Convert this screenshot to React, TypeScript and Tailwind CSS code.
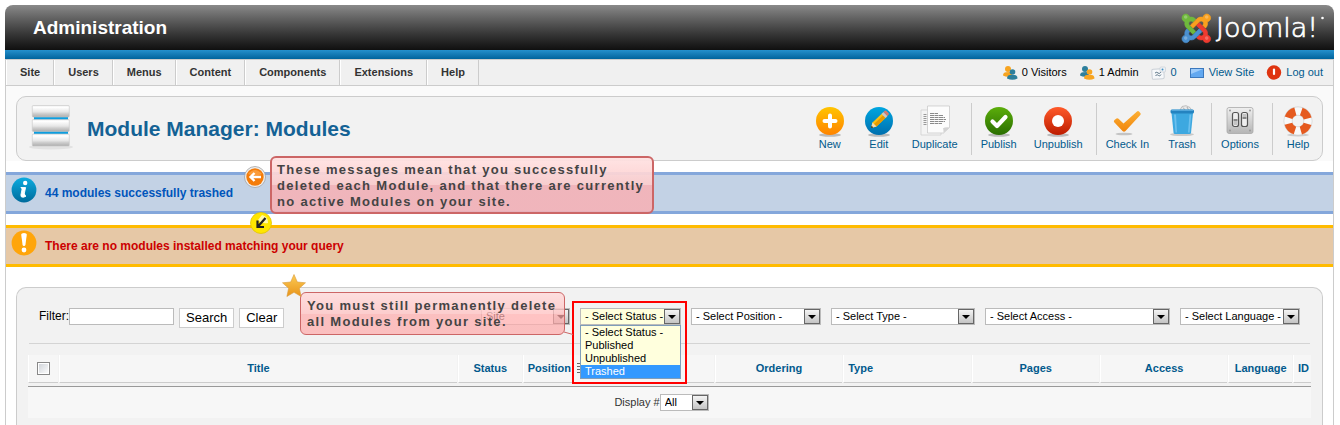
import type { ReactNode } from 'react';

const menuItems = ['Site', 'Users', 'Menus', 'Content', 'Components', 'Extensions', 'Help'];

function JoomlaLogo() {
  return (
    <svg width="146" height="34" viewBox="0 0 146 34" role="img" aria-label="Joomla!">
      <g transform="translate(2 1) scale(0.064)">
        <g strokeWidth="10">
          <path fill="#6fb93c" stroke="#6fb93c" d="M.6 92.1C.6 58.8 27.4 32 60.4 32c30 0 54.5 21.9 59.2 50.2 32.6-7.6 67.1.6 96.5 30l-44.3 44.3c-20.5-20.5-42.6-16.3-55.4-3.5-14.3 14.3-14.3 37.9 0 52.2l99.5 99.5-44 44.3c-87.7-87.2-49.7-49.7-99.8-99.7-26.8-26.5-35-64.8-24.8-98.9C20.4 144.6.6 120.7.6 92.1z" />
          <path fill="#f9a01e" stroke="#f9a01e" d="M130.1 208.5l44.3 44.3c10-10 89.7-89.7 99.7-99.8 14.3-14.3 37.6-14.3 51.9 0 12.8 12.8 17 35-3.5 55.4l44 44.3c31.2-31.2 38.5-67.6 28.9-101.2 29.2-4.1 51.9-29.2 51.9-59.5 0-33.2-26.8-60.1-59.8-60.1-30.3 0-55.4 22.5-59.5 51.6-33.8-9.9-71.7-1.5-98.3 25.1-18.3 19.1-71.1 71.5-99.6 99.9z" />
          <path fill="#ee3b2f" stroke="#ee3b2f" d="M396.4 360.7c8.2-32.7-.9-68.5-26.3-93.9-11.8-12.2 5 4.7-99.5-99.7l-44.3 44.3 99.7 99.7c14.3 14.3 14.3 37.6 0 51.9-12.8 12.8-35 17-55.4-3.5l-44 44.3c27.6 30.2 68 38.8 102.7 28 5.5 27.4 29.7 48.1 58.9 48.1 33 0 59.8-26.8 59.8-60.1 0-30.2-22.5-55-51.6-59.1z" />
          <path fill="#4a90d0" stroke="#4a90d0" d="M312.1 307.6l-44-44.3c-87 86.4-50.4 50.4-99.7 99.8-14.3 14.3-37.6 14.3-51.9 0-13.1-13.4-16.9-35.3 3.2-55.4l-44-44.3c-30.2 30.2-38 65.2-29.5 98.3-26.7 6-46.2 29.9-46.2 58.2C0 453.2 26.8 480 59.8 480c28.6 0 52.5-19.8 58.6-46.7 32.7 8.2 68.5-.6 94.2-26 32.1-32 12.2-12.4 99.5-99.7z" />
        </g>
        <g fill="#fff" opacity=".25">
          <circle cx="58" cy="78" r="28" />
          <circle cx="386" cy="78" r="28" />
          <circle cx="386" cy="408" r="28" />
          <circle cx="58" cy="408" r="28" />
        </g>
      </g>
      <text x="36" y="26" fill="#fff" stroke="#fff" strokeWidth=".7" fontSize="27" fontWeight="200" className="font-['DejaVu_Sans_Light','DejaVu_Sans',sans-serif]">
        Joomla!
      </text>
      <circle cx="142.500" cy="7" r="1.300" fill="#fff" />
    </svg>
  );
}

function Ball({ from, to, children }: { from: string; to: string; children: ReactNode }) {
  const id = `ball-${from.slice(1)}`;
  return (
    <svg width="32" height="32" viewBox="0 0 32 32" aria-hidden="true">
      <defs>
        <linearGradient id={id} x1="0" y1="0" x2="0" y2="1">
          <stop offset="0" stopColor={from} />
          <stop offset="1" stopColor={to} />
        </linearGradient>
      </defs>
      <ellipse cx="16" cy="30" rx="11" ry="1.800" fill="#bbb" />
      <circle cx="16" cy="16" r="14" fill={`url(#${id})`} />
      {children}
    </svg>
  );
}

function NewIcon() {
  return (
    <Ball from="#ffc400" to="#ff8400">
      <path d="M16 10.500v11M10.500 16h11" stroke="#fff" strokeWidth="4" strokeLinecap="round" />
    </Ball>
  );
}

function EditIcon() {
  return (
    <Ball from="#00a6e0" to="#006fae">
      <path d="M8 23l1.500-5.500L20 7.500l4 4L13.500 21.500z" fill="#fdc010" />
      <path d="M10.500 19.500L21.500 9l2.500 2.500L13.500 21.500z" fill="#e69a00" />
      <path d="M8 23l1.500-5.500 4 4z" fill="#f4dcb0" />
      <path d="M8 23l.6-2.300 1.700 1.700z" fill="#222" />
      <path d="M18.500 9l2-2 4 4-2 2z" fill="#c9c9c9" />
      <path d="M20.500 7l1.200-1.200q1-.6 1.800.2l2 2q.8.900 0 1.800L24.500 11z" fill="#d87c6c" />
    </Ball>
  );
}

function DuplicateIcon() {
  return (
    <svg width="32" height="32" viewBox="0 0 32 32" aria-hidden="true">
      <path d="M2 5h20v25H2z" fill="#f4f4f4" stroke="#ccc" strokeWidth=".7" />
      <path d="M4.500 9.500h4M4.500 11.500h4M4.500 13.500h4M4.500 15.500h4M4.500 17.500h4M4.500 19.500h4" stroke="#999" strokeWidth="1" strokeDasharray="3 .6" />
      <path d="M8.500 1h22v21.500l-6 5.500h-16z" fill="#fcfcfc" stroke="#c4c4c4" strokeWidth=".7" />
      <path d="M30.500 22.500q-4.500-.5-6.500.8.800 2 .5 4.700z" fill="#d3d3d3" />
      <path d="M11 8.500h8M11 10.500h13M11 12.500h15M11 14.500h16M11 16.500h15M11 18.500h12" stroke="#8a8a8a" strokeWidth="1" strokeDasharray="4 .5" />
    </svg>
  );
}

function PublishIcon() {
  return (
    <Ball from="#5cae0b" to="#2a6e00">
      <path d="M9.500 16.500l4.500 4.500 8.500-9" fill="none" stroke="#fff" strokeWidth="4.200" strokeLinecap="round" strokeLinejoin="round" />
    </Ball>
  );
}

function UnpublishIcon() {
  return (
    <Ball from="#ff5a2a" to="#bd1c00">
      <circle cx="16" cy="16" r="6" fill="#fff" />
    </Ball>
  );
}

function CheckInIcon() {
  return (
    <svg width="32" height="32" viewBox="0 0 32 32" aria-hidden="true">
      <defs>
        <linearGradient id="tick" x1="0" y1="0" x2="0" y2="1">
          <stop offset="0" stopColor="#fdb035" />
          <stop offset="1" stopColor="#f0850c" />
        </linearGradient>
      </defs>
      <ellipse cx="13" cy="29" rx="8.500" ry="1.300" fill="#c4c4c4" />
      <path d="M3 17q-.5-1 .5-2l2-1.500q1-.6 2 .3l5 4.700L26 6.500q1-.8 2 0l1.500 1.700q.6.800-.2 1.800L14.500 26q-1.500 1.500-3 0z" fill="url(#tick)" />
    </svg>
  );
}

function TrashIcon() {
  return (
    <svg width="32" height="32" viewBox="0 0 32 32" aria-hidden="true">
      <ellipse cx="16" cy="29.500" rx="12" ry="1.600" fill="#c9c9c9" />
      <path d="M14 5l2-3.500 4-.8 4 1.800 2 3.500z" fill="#e9e9e9" stroke="#aaa" strokeWidth=".7" />
      <path d="M17 2.500l2.500 3M21 2l1.500 3" stroke="#999" strokeWidth=".8" />
      <path d="M5.500 8h21.500l-2 20q-.2 1-1.500 1H9q-1.200 0-1.400-1z" fill="#3da8e0" />
      <path d="M8 9.500h2l1 18H9.500zM23.500 9.500h1.800l-1.700 18H22z" fill="#6cc0ee" />
      <rect x="4.500" y="4.500" width="23.500" height="4" rx="1.500" fill="#2483c0" />
      <path d="M5.500 5.200H27" stroke="#69b9e6" />
    </svg>
  );
}

function OptionsIcon() {
  return (
    <svg width="32" height="32" viewBox="0 0 32 32" aria-hidden="true">
      <defs>
        <linearGradient id="plate" x1="0" y1="0" x2="0" y2="1">
          <stop offset="0" stopColor="#f0f0f0" />
          <stop offset="1" stopColor="#b5b5b5" />
        </linearGradient>
      </defs>
      <rect x="3" y="2.500" width="26" height="26" rx="2" fill="url(#plate)" stroke="#aaa" strokeWidth=".8" />
      <g fill="#999">
        <circle cx="6" cy="5.500" r="1" />
        <circle cx="26" cy="5.500" r="1" />
        <circle cx="6" cy="25.500" r="1" />
        <circle cx="26" cy="25.500" r="1" />
      </g>
      <rect x="8.500" y="7.500" width="6" height="14" rx="2" fill="#eee" stroke="#555" strokeWidth="1.200" />
      <rect x="17.500" y="7.500" width="6" height="14" rx="2" fill="#eee" stroke="#555" strokeWidth="1.200" />
      <path d="M9.500 14h4v2h-4zM18.500 12h4v2h-4z" fill="#888" />
      <path d="M9.500 16h4v4h-4zM18.500 9h4v3h-4z" fill="#c4c4c4" />
    </svg>
  );
}

function HelpIcon() {
  return (
    <svg width="32" height="32" viewBox="0 0 32 32" aria-hidden="true">
      <ellipse cx="16" cy="30" rx="11" ry="1.500" fill="#ccc" />
      <circle cx="16" cy="16" r="10" fill="none" stroke="#d0d0d0" strokeWidth="8.800" />
      <circle cx="16" cy="16" r="10" fill="none" stroke="#f8f8f8" strokeWidth="7.600" />
      <circle
        cx="16"
        cy="16"
        r="10"
        fill="none"
        stroke="#e55a1f"
        strokeWidth="8"
        strokeDasharray="9.700 6.008"
        strokeDashoffset="-3"
      />
    </svg>
  );
}

function UsersIcon({ front, back }: { front: string; back: string }) {
  return (
    <svg width="16" height="16" viewBox="0 0 16 16" aria-hidden="true">
      <circle cx="6" cy="4" r="3" fill={back} />
      <path d="M1 10.500q0-3 3-3.200l4-.3q2 .3 2 3.500-4 2.500-9 0z" fill={back} />
      <circle cx="10.500" cy="7" r="2.800" fill={front} />
      <path d="M5 13.500q0-3.300 3-3.600h4.500q3 .3 3 3.600-5 2.500-10.500 0z" fill={front} />
    </svg>
  );
}

function MailIcon() {
  return (
    <svg width="16" height="16" viewBox="0 0 16 16" aria-hidden="true">
      <rect x="1" y="4" width="12" height="10" rx="1.500" fill="#f6f8fa" stroke="#c9cfd6" transform="rotate(-4 7 9)" />
      <path d="M4 8q2-1.500 3 0t3-1M4.500 10.500q2-1.500 3 0t2.500-1" fill="none" stroke="#5d7688" />
      <rect x="9" y="2" width="5.500" height="5" rx="1" fill="#eef2f5" stroke="#c9cfd6" strokeWidth=".7" />
      <circle cx="11.500" cy="4.500" r="1" fill="#3f8fc4" />
    </svg>
  );
}

function ScreenIcon() {
  return (
    <svg width="16" height="16" viewBox="0 0 16 16" aria-hidden="true">
      <rect x="1.500" y="3.500" width="13" height="9" fill="#62a8f0" stroke="#3b78bd" />
      <path d="M2 4h12L2 9z" fill="#9dcbfa" />
    </svg>
  );
}

function LogoutIcon() {
  return (
    <svg width="16" height="16" viewBox="0 0 16 16" aria-hidden="true">
      <circle cx="8" cy="7.500" r="7.200" fill="#df3410" />
      <path d="M8 4.500v4.500" stroke="#fff" strokeWidth="2.200" strokeLinecap="round" />
    </svg>
  );
}

function ModuleIcon() {
  return (
    <svg width="48" height="48" viewBox="0 0 48 48" aria-hidden="true">
      <defs>
        <linearGradient id="slab" x1="0" y1="0" x2="0" y2="1">
          <stop offset="0" stopColor="#ececec" />
          <stop offset=".15" stopColor="#fff" />
          <stop offset=".55" stopColor="#e6e6e6" />
          <stop offset=".7" stopColor="#cfcfcf" />
          <stop offset="1" stopColor="#adadad" />
        </linearGradient>
      </defs>
      <ellipse cx="24" cy="42" rx="22" ry="2.500" fill="#e2e2e2" />
      <path d="M7 10h34v20H7z" fill="#0d9ee0" />
      <g fill="url(#slab)" stroke="#c6c6c6" strokeWidth=".6">
        <rect x="5.300" y=".5" width="37" height="11.500" rx="1" />
        <rect x="5.300" y="14.500" width="37" height="12" rx="1" />
        <rect x="5.300" y="29" width="37" height="12" rx="1" />
      </g>
    </svg>
  );
}

function InfoIcon() {
  return (
    <svg width="26" height="26" viewBox="0 0 26 26" aria-hidden="true">
      <defs>
        <linearGradient id="info" x1="0" y1="0" x2="0" y2="1">
          <stop offset="0" stopColor="#0cabdf" />
          <stop offset="1" stopColor="#006b9c" />
        </linearGradient>
      </defs>
      <circle cx="13" cy="13" r="12.400" fill="url(#info)" />
      <circle cx="14.200" cy="6" r="2.200" fill="#fff" />
      <path d="M9.800 10.500h4.800l-1.700 7.800q-.2 1 1.800.3M9.800 10.500l1.600.3-1.500 7.200q-.4 2.600 2.600 2.200l2.500-1" fill="#fff" stroke="#fff" strokeWidth=".9" />
    </svg>
  );
}

function WarningIcon() {
  return (
    <svg width="26" height="26" viewBox="0 0 26 26" aria-hidden="true">
      <circle cx="13" cy="13" r="12.400" fill="#ffa50a" />
      <path d="M10.200 4.500q0-1.500 2.800-1.500t2.800 1.500l-1.300 10q-.2 1.500-1.500 1.500t-1.500-1.500z" fill="#fff" />
      <circle cx="13" cy="20" r="2.400" fill="#fff" />
    </svg>
  );
}

function ToolButton({ label, children }: { label: string; children: ReactNode }) {
  return (
    <button type="button" className="flex flex-col items-center px-2 pb-px text-[11px] leading-[15px] text-[#025a8d]">
      {children}
      {label}
    </button>
  );
}

function ToolDivider() {
  return <div className="ml-1 h-[52px] w-px bg-[#ccc]" />;
}

function Select({ label, options, className }: { label: string; options: string[]; className: string }) {
  return (
    <div className="relative">
      <select
        aria-label={label}
        className={`block h-[17px] appearance-none border border-[#bbb] pl-1 text-[11px] leading-[15px] text-black ${className}`}
      >
        {options.map((option) => (
          <option key={option}>{option}</option>
        ))}
      </select>
      <span className="pointer-events-none absolute inset-y-px right-px flex w-4 items-center justify-center border border-[#666] bg-gradient-to-b from-[#f4f4f4] to-[#c4c4c4]">
        <svg width="8" height="5" viewBox="0 0 8 5" aria-hidden="true">
          <path d="M0 1h8L4 5z" fill="#000" />
        </svg>
      </span>
    </div>
  );
}

function Message({ children, icon, className }: { children: string; icon: ReactNode; className: string }) {
  return (
    <div className={`flex items-start border-y-[3px] pl-[5px] text-[12px] leading-4 font-bold ${className}`}>
      <div className="h-9 pt-[2px]">{icon}</div>
      <p className="pt-[10px] pl-2">{children}</p>
    </div>
  );
}

const headClass = 'h-7 border-b border-l border-b-[#ccc] border-l-white bg-[#f6f6f6] px-1 pb-px align-middle font-bold';

export default function App() {
  return (
    <div className="relative flex min-h-screen flex-col bg-white pt-[5px] pr-[6px] pl-[5px] font-['Liberation_Sans',Arial,sans-serif] text-[11px] text-black">
      <header className="flex h-[45px] items-center justify-between rounded-t-lg bg-gradient-to-b from-[#8a8a8a] to-[#101010] pr-[8px] pl-7">
        <h1 className="text-[19px] leading-6 font-bold text-white">Administration</h1>
        <JoomlaLogo />
      </header>
      <div className="h-[9px] bg-gradient-to-b from-[#2490cc] to-[#00639c]" />

      <div className="flex flex-1 flex-col border-x border-[#ccc]">
        <div className="flex h-[27px] items-stretch justify-between border-y border-[#ccc] bg-[#f0f0f0]">
          <nav className="flex font-bold text-[#333]">
            {menuItems.map((item) => (
              <a key={item} href="#" className="flex items-center border-r border-l border-r-[#ccc] border-l-white px-[13px]">
                {item}
              </a>
            ))}
          </nav>
          <div className="flex items-center gap-3 pr-[10px]">
            <span className="flex items-center gap-1">
              <UsersIcon front="#2d7f9c" back="#f7a420" />0 Visitors
            </span>
            <span className="flex items-center gap-1">
              <UsersIcon front="#f7a420" back="#2d7f9c" />1 Admin
            </span>
            <a href="#" className="flex items-center gap-1 text-[#025a8d]">
              <MailIcon />0
            </a>
            <a href="#" className="flex items-center gap-1 text-[#025a8d]">
              <ScreenIcon />
              View Site
            </a>
            <a href="#" className="flex items-center gap-1 text-[#025a8d]">
              <LogoutIcon />
              Log out
            </a>
          </div>
        </div>

        <div className="bg-[#fafafa] px-[10px] pt-[10px]">
          <div className="flex h-[65px] items-center justify-between rounded-[10px] border border-[#ccc] bg-[#f2f2f2] pl-[10px]">
            <div className="flex items-center gap-3">
              <ModuleIcon />
              <h2 className="text-[21px] leading-7 font-bold text-[#146295]">Module Manager: Modules</h2>
            </div>
            <div className="flex items-center gap-px">
              <ToolButton label="New"><NewIcon /></ToolButton>
              <ToolButton label="Edit"><EditIcon /></ToolButton>
              <ToolButton label="Duplicate"><DuplicateIcon /></ToolButton>
              <ToolDivider />
              <ToolButton label="Publish"><PublishIcon /></ToolButton>
              <ToolButton label="Unpublish"><UnpublishIcon /></ToolButton>
              <ToolDivider />
              <ToolButton label="Check In"><CheckInIcon /></ToolButton>
              <ToolButton label="Trash"><TrashIcon /></ToolButton>
              <ToolDivider />
              <ToolButton label="Options"><OptionsIcon /></ToolButton>
              <ToolDivider />
              <ToolButton label="Help"><HelpIcon /></ToolButton>
            </div>
          </div>
        </div>

        <div className="flex flex-col gap-[11px] pt-[11px] pb-5">
          <Message icon={<InfoIcon />} className="border-[#84a7db] bg-[#c3d2e5] text-[#0055bb]">
            44 modules successfully trashed
          </Message>
          <Message icon={<WarningIcon />} className="border-[#ffbb00] bg-[#e6c8a6] text-[#cc0000]">
            There are no modules installed matching your query
          </Message>
        </div>

        <main className="mx-[10px] flex-1 rounded-t-[10px] border border-b-0 border-[#ccc] bg-[#f2f2f2] px-[10px] pt-5">
          <form className="mx-[2px] flex items-start justify-between border-b border-[#d4d4d4] pr-[10px] pb-[15px] pl-[10px]">
            <div className="flex items-start">
              <label htmlFor="filter" className="text-[12px] leading-4">Filter:</label>
              <input id="filter" type="text" className="mr-[5px] h-[17px] w-[105px] border border-[#bbb] bg-white" />
              <button type="button" className="mr-[5px] h-5 border border-[#ccc] bg-white px-[6px] text-[13px] leading-4">Search</button>
              <button type="button" className="h-5 border border-[#ccc] bg-white px-[6px] text-[13px] leading-4">Clear</button>
            </div>
            <div className="flex gap-[10px]">
              <Select label="Client" options={['Site', 'Administrator']} className="w-[89px] bg-white" />
              <div className="relative">
                <Select
                  label="Status"
                  options={['- Select Status -', 'Published', 'Unpublished', 'Trashed']}
                  className="w-[101px] bg-[#ffffdd]"
                />
                <div className="pointer-events-none absolute -top-[7px] -left-2 z-10 h-[83px] w-[115px] border-2 border-[#ff0000]" />
                <ul role="listbox" aria-label="Status options" className="absolute top-[17px] left-0 z-10 w-[101px] border border-[#7f9db9] bg-[#ffffdd] text-[11px] leading-[13px]">
                  <li role="option" aria-selected="false" className="pl-1">- Select Status -</li>
                  <li role="option" aria-selected="false" className="pl-1">Published</li>
                  <li role="option" aria-selected="false" className="pl-1">Unpublished</li>
                  <li role="option" aria-selected="true" className="bg-[#3399ff] pl-1 text-white">Trashed</li>
                </ul>
              </div>
              <Select label="Position" options={['- Select Position -']} className="w-[130px] bg-white" />
              <Select label="Type" options={['- Select Type -']} className="w-[144px] bg-white" />
              <Select label="Access" options={['- Select Access -']} className="w-[185px] bg-white" />
              <Select label="Language" options={['- Select Language -']} className="w-[120px] bg-white" />
            </div>
          </form>

          <table className="mt-2 w-full table-fixed border-separate border-spacing-x-px border-spacing-y-[3px] text-center text-[#025a8d]">
            <thead>
              <tr>
                <th className={`${headClass} w-[30px]`}>
                  <input type="checkbox" aria-label="Check all" className="mx-auto block size-[13px] appearance-none border border-[#888] bg-gradient-to-br from-[#ccd0d6] to-white shadow-[inset_0_0_0_1px_#fff]" />
                </th>
                <th className={headClass}>Title</th>
                <th className={`${headClass} w-[5%]`}>Status</th>
                <th className={`${headClass} w-[15%] text-left`}>
                  <span className="flex items-center gap-[6px]">
                    Position
                    <svg width="12" height="12" viewBox="0 0 12 12" aria-hidden="true">
                      <path d="M0 1.500h12M0 4.500h12M0 7.500h12M0 10.500h12" stroke="#666" />
                    </svg>
                  </span>
                </th>
                <th className={`${headClass} w-[10%]`}>Ordering</th>
                <th className={`${headClass} w-[10%] text-left`}>Type</th>
                <th className={`${headClass} w-[10%]`}>Pages</th>
                <th className={`${headClass} w-[10%]`}>Access</th>
                <th className={`${headClass} w-[5%]`}>Language</th>
                <th className={`${headClass} w-[18px]`}>ID</th>
              </tr>
            </thead>
            <tfoot>
              <tr>
                <td colSpan={10} className="h-8 border-t border-[#999] bg-[#f7f7f7] p-0 text-[#333]">
                  <div className="flex items-center justify-center pr-4">
                    Display #
                    <Select label="Display" options={['All', '20', '50']} className="w-[49px] bg-white" />
                  </div>
                </td>
              </tr>
            </tfoot>
          </table>
        </main>
      </div>

      <aside className="absolute top-[156px] left-[270px] z-20 h-[58px] w-[384px] rounded-md border-2 border-[#cc6666] bg-linear-to-b from-[#ffe2e2f0] from-0% via-[#fcccccea] via-50% to-[#f8b0b4d8] to-50% pt-[4px] pl-[5px] text-[13px] leading-4 font-bold tracking-widest text-[#444]">
        These messages mean that you successfully
        <br />
        deleted each Module, and that there are currently
        <br />
        no active Modules on your site.
      </aside>
      <svg width="22" height="22" viewBox="0 0 22 22" className="absolute top-[166px] left-[244px] z-20" aria-hidden="true">
        <circle cx="11" cy="11" r="10.500" fill="#eee" stroke="#999" strokeWidth=".7" />
        <circle cx="11" cy="11" r="8.700" fill="#f47c0a" />
        <path d="M4 8q7-8 14 0-7 3-14 0z" fill="#ffb35c" opacity=".6" />
        <path d="M17 11H7M10.500 7L6.500 11l4 4" fill="none" stroke="#fff" strokeWidth="2.400" />
      </svg>
      <svg width="22" height="22" viewBox="0 0 22 22" className="absolute top-[212px] left-[250px] z-20" aria-hidden="true">
        <circle cx="11" cy="11" r="10.500" fill="#ffe600" stroke="#e2c400" strokeWidth=".8" />
        <path d="M12 3q6 1 6 8-6 1-10-3z" fill="#fff8a8" />
        <path d="M15.500 6L8 14.500M7.500 8.500v6.500h6.500" fill="none" stroke="#222" strokeWidth="2.200" />
      </svg>

      <aside className="absolute top-[292px] left-[300px] z-20 h-[43px] w-[265px] rounded-md border border-[#cc6666] bg-linear-to-b from-[#ffdcdce0] from-0% via-[#ffc4c4cc] via-50% to-[#ffacacb8] to-50% pt-[5px] pl-[6px] text-[13px] leading-4 font-bold tracking-widest text-[#444]">
        You must still permanently delete
        <br />
        all Modules from your site.
      </aside>
      <svg width="9" height="6" viewBox="0 0 9 6" className="absolute top-[330px] left-[564px] z-20" aria-hidden="true">
        <path d="M0 2l9 2.500" stroke="#cc6666" />
      </svg>
      <svg width="26" height="26" viewBox="0 0 26 26" className="absolute top-[273px] left-[281px] z-20" aria-hidden="true">
        <defs>
          <linearGradient id="star" x1="0" y1="0" x2="0" y2="1">
            <stop offset="0" stopColor="#fccb55" />
            <stop offset="1" stopColor="#e8941a" />
          </linearGradient>
        </defs>
        <path d="M13 1.500l3.300 7.500 8.200.8-6.100 5.500 1.700 8.200-7.100-4.200-7.100 4.200 1.700-8.200L1.500 9.800l8.200-.8z" fill="url(#star)" stroke="#d99a3a" strokeWidth=".6" />
      </svg>
    </div>
  );
}
